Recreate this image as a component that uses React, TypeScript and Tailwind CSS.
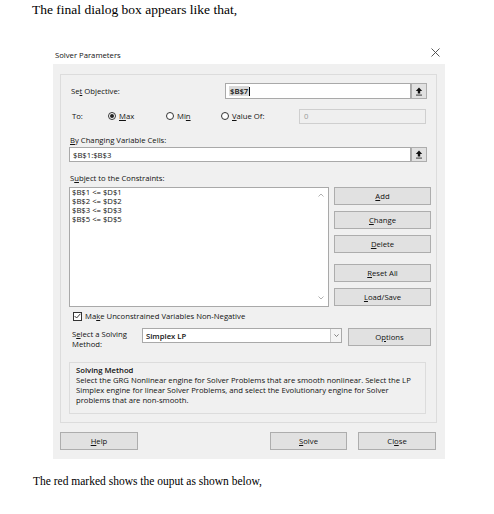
import React from "react";

const ui = "font-['Open_Sans',sans-serif] text-[7.7px] font-medium leading-[10px] text-[#111]";

function Btn({ children, className = "" }: { children: React.ReactNode; className?: string }) {
  return (
    <div className={`flex h-[18px] items-center justify-center border border-[#adadad] bg-[#e1e1e1] ${className}`}>
      {children}
    </div>
  );
}

function UpButton() {
  return (
    <div className="flex h-full w-[16px] items-center justify-center border border-[#adadad] bg-[#e1e1e1]">
      <svg width="8" height="9" viewBox="0 0 8 9">
        <path d="M4 0.5 L0.8 4 H2.8 V6.5 H5.2 V4 H7.2 Z" fill="#111" />
        <rect x="1" y="7.5" width="6" height="1.2" fill="#555" />
      </svg>
    </div>
  );
}

function Radio({ checked, children, className = "" }: { checked?: boolean; children: React.ReactNode; className?: string }) {
  return (
    <div className={`flex items-center gap-[3px] ${className}`}>
      <span className="flex h-[8px] w-[8px] items-center justify-center rounded-full border border-[#333] bg-white">
        {checked && <span className="h-[4px] w-[4px] rounded-full bg-[#222]" />}
      </span>
      <span>{children}</span>
    </div>
  );
}

function Chevron({ dir }: { dir: "up" | "down" }) {
  return (
    <svg width="6" height="4" viewBox="0 0 6 4">
      <path d={dir === "up" ? "M0.5 3.5 L3 1 L5.5 3.5" : "M0.5 0.5 L3 3 L5.5 0.5"} fill="none" stroke="#a8a8a8" strokeWidth="0.9" />
    </svg>
  );
}

export default function App() {
  return (
    <div className="flex h-[514px] w-[494px] flex-col overflow-hidden bg-white">
      <p className="pl-[32px] pt-[2px] font-['Liberation_Serif',serif] text-[13.5px] leading-[15px] text-black">
        The final dialog box appears like that,
      </p>

      <div className={`ml-[53px] mt-[27px] w-[392px] ${ui}`}>
        <div className="flex h-[20px] items-start justify-between">
          <span className="ml-[2px] mt-[6px]">Solver Parameters</span>
          <svg width="9" height="9" viewBox="0 0 9 9" className="mr-[5px] mt-[4px]">
            <path d="M0.5 0.5 L8.5 8.5 M8.5 0.5 L0.5 8.5" stroke="#444" strokeWidth="0.9" />
          </svg>
        </div>

        <div className="flex flex-col bg-[#f0f0f0] pb-[9px] pl-[7px] pr-[8px] pt-[10px]">
          <div className="flex h-[349px] w-[377px] flex-col border border-[#dcdcdc] pt-[8px]">
            {/* objective */}
            <div className="flex h-[16px] items-center">
              <span className="ml-[10px] w-[154px]">
                Se<u>t</u> Objective:
              </span>
              <div className="flex h-full w-[186px] items-center border border-[#a9a9a9] bg-white pl-[3px]">
                <span className="bg-[#dadada] px-[1px] font-semibold">$B$7</span>
                <span className="h-[9px] w-[1px] bg-black" />
              </div>
              <UpButton />
            </div>

            {/* to */}
            <div className="mt-[9px] flex h-[16px] items-center">
              <span className="ml-[11px] w-[36px]">To:</span>
              <Radio checked className="w-[58px]">
                <u>M</u>ax
              </Radio>
              <Radio className="w-[55px]">
                Mi<u>n</u>
              </Radio>
              <Radio className="w-[78px]">
                <u>V</u>alue Of:
              </Radio>
              <div className="flex h-[15px] w-[127px] items-center border border-[#cfcfcf] bg-[#efefef] pl-[4px] text-[#9a9a9a]">
                0
              </div>
            </div>

            {/* changing cells */}
            <div className="ml-[9px] mt-[10px] flex h-[12px] items-center">
              <span>
                <u>B</u>y Changing Variable Cells:
              </span>
            </div>
            <div className="ml-[8px] mt-[1px] flex h-[15px] items-center">
              <div className="flex h-full w-[342px] items-center border border-[#a9a9a9] bg-white pl-[3px]">
                $B$1:$B$3
              </div>
              <UpButton />
            </div>

            {/* constraints */}
            <div className="ml-[9px] mt-[10px] flex h-[12px] items-center">
              <span>
                S<u>u</u>bject to the Constraints:
              </span>
            </div>
            <div className="ml-[8px] mt-[3px] flex h-[120px] gap-[5px]">
              <div className="flex w-[260px] border border-[#a9a9a9] bg-white">
                <div className="flex flex-1 flex-col pl-[2px] leading-[9px]">
                  <span>$B$1 &lt;= $D$1</span>
                  <span>$B$2 &lt;= $D$2</span>
                  <span>$B$3 &lt;= $D$3</span>
                  <span>$B$5 &lt;= $D$5</span>
                </div>
                <div className="flex w-[14px] flex-col items-center justify-between pb-[6px] pt-[5px]">
                  <Chevron dir="up" />
                  <Chevron dir="down" />
                </div>
              </div>
              <div className="flex w-[97px] flex-col">
                <Btn>
                  <span>
                    <u>A</u>dd
                  </span>
                </Btn>
                <Btn className="mt-[6px]">
                  <span>
                    <u>C</u>hange
                  </span>
                </Btn>
                <Btn className="mt-[6px]">
                  <span>
                    <u>D</u>elete
                  </span>
                </Btn>
                <Btn className="mt-[11px]">
                  <span>
                    <u>R</u>eset All
                  </span>
                </Btn>
                <Btn className="mt-[6px]">
                  <span>
                    <u>L</u>oad/Save
                  </span>
                </Btn>
              </div>
            </div>

            {/* checkbox */}
            <div className="ml-[12px] mt-[2px] flex h-[14px] items-center gap-[3px]">
              <span className="flex h-[9px] w-[9px] items-center justify-center border border-[#333] bg-white">
                <svg width="7" height="6" viewBox="0 0 7 6">
                  <path d="M0.6 3 L2.6 5 L6.4 0.8" fill="none" stroke="#222" strokeWidth="0.9" />
                </svg>
              </span>
              <span>
                Ma<u>k</u>e Unconstrained Variables Non-Negative
              </span>
            </div>

            {/* solving method select */}
            <div className="mt-[5px] flex h-[22px] items-start">
              <span className="ml-[11px] mt-[2px] w-[70px] leading-[9.5px]">
                S<u>e</u>lect a Solving
                <br />
                Method:
              </span>
              <div className="flex h-[15px] w-[200px] items-center border border-[#a9a9a9] bg-white pl-[3px]">
                <span className="flex-1 font-semibold">Simplex LP</span>
                <span className="flex h-full w-[11px] items-center justify-center border-l border-[#c8c8c8] bg-[#f4f4f4]">
                  <svg width="5" height="3" viewBox="0 0 5 3">
                    <path d="M0.4 0.4 L2.5 2.5 L4.6 0.4" fill="none" stroke="#666" strokeWidth="0.8" />
                  </svg>
                </span>
              </div>
              <Btn className="ml-[6px] w-[83px]">
                <span>
                  O<u>p</u>tions
                </span>
              </Btn>
            </div>

            {/* description */}
            <div className="ml-[8px] mt-[12px] flex h-[52px] w-[357px] flex-col border border-[#dcdcdc] pl-[6px] pt-[2px]">
              <span className="font-semibold">Solving Method</span>
              <span className="whitespace-nowrap">
                Select the GRG Nonlinear engine for Solver Problems that are smooth nonlinear. Select the LP
                <br />
                Simplex engine for linear Solver Problems, and select the Evolutionary engine for Solver
                <br />
                problems that are non-smooth.
              </span>
            </div>
          </div>

          <div className="mt-[9px] flex h-[18px]">
            <Btn className="w-[78px]">
              <span>
                <u>H</u>elp
              </span>
            </Btn>
            <Btn className="ml-[132px] w-[77px] border-[#0078d7]">
              <span>
                <u>S</u>olve
              </span>
            </Btn>
            <Btn className="ml-[11px] w-[78px]">
              <span>
                Cl<u>o</u>se
              </span>
            </Btn>
          </div>
        </div>
      </div>

      <p className="mt-[15px] pl-[33px] font-['Liberation_Serif',serif] text-[11.5px] leading-[14px] text-black">
        The red marked shows the ouput as shown below,
      </p>
    </div>
  );
}
